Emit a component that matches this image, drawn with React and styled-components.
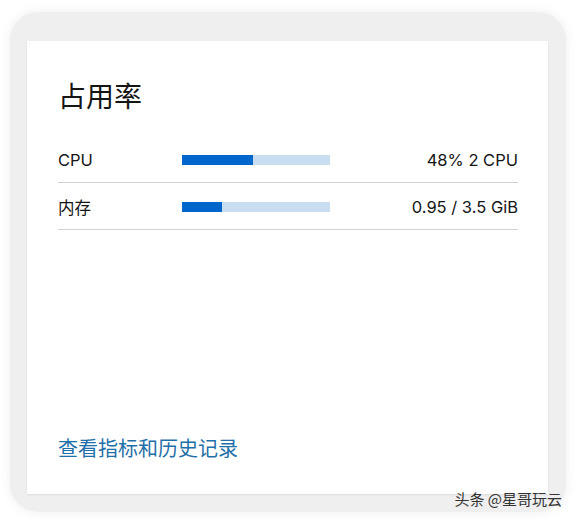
import React from "react";
import styled, { createGlobalStyle } from "styled-components";

const Global = createGlobalStyle`
  html, body { margin: 0; padding: 0; background: #ffffff; }
  body { font-family: "Inter", "Noto Sans CJK SC", sans-serif; }
`;

const Page = styled.div`
  position: relative;
  width: 574px;
  height: 520px;
  padding: 12px 8px 8px 10px;
  box-sizing: border-box;
`;

const Panel = styled.div`
  height: 500px;
  background: #efefef;
  border-radius: 28px;
  box-shadow: 0 0 12px rgba(0, 0, 0, 0.07);
  padding: 29px 18px 18px 17px;
  box-sizing: border-box;
  display: flex;
`;

const Card = styled.div`
  flex: 1;
  background: #ffffff;
  box-shadow: 0 1px 2px rgba(0, 0, 0, 0.08);
  padding: 36px 30px 32px 31px;
  display: flex;
  flex-direction: column;
`;

const Title = styled.h2`
  margin: 0 0 23px;
  font-family: "Noto Sans CJK SC", sans-serif;
  font-weight: 400;
  font-size: 28px;
  line-height: 36px;
  color: #151515;
`;

const Row = styled.div`
  display: grid;
  grid-template-columns: 124px 148px 1fr;
  align-items: center;
  height: 47px;
  box-sizing: border-box;
  padding-top: 1px;
  border-bottom: 1px solid #d2d2d2;
  font-size: 16.5px;
  color: #151515;
`;

const Label = styled.span`
  font-family: "Inter", "Noto Sans CJK SC", sans-serif;
`;

const Track = styled.div`
  height: 10px;
  background: #c9ddf1;
  display: flex;
`;

const Fill = styled.div`
  height: 100%;
  background: #0066cc;
`;

const Value = styled.span`
  text-align: right;
`;

const Link = styled.a`
  margin-top: auto;
  font-family: "Noto Sans CJK SC", sans-serif;
  font-size: 20px;
  line-height: 28px;
  color: #1f6fa8;
  text-decoration: none;
`;

const Watermark = styled.div`
  position: absolute;
  right: 12px;
  bottom: 11px;
  font-family: "Noto Sans CJK SC", sans-serif;
  font-size: 15px;
  color: #333;
`;

const rows = [
  { label: "CPU", pct: 48, value: "48% 2 CPU" },
  { label: "内存", pct: 27, value: "0.95 / 3.5 GiB" },
];

export default function App() {
  return (
    <>
      <Global />
      <Page>
        <Panel>
          <Card>
            <Title>占用率</Title>
            {rows.map((r) => (
              <Row key={r.label}>
                <Label>{r.label}</Label>
                <Track>
                  <Fill style={{ width: `${r.pct}%` }} />
                </Track>
                <Value>{r.value}</Value>
              </Row>
            ))}
            <Link href="#">查看指标和历史记录</Link>
          </Card>
        </Panel>
        <Watermark>头条 @星哥玩云</Watermark>
      </Page>
    </>
  );
}
